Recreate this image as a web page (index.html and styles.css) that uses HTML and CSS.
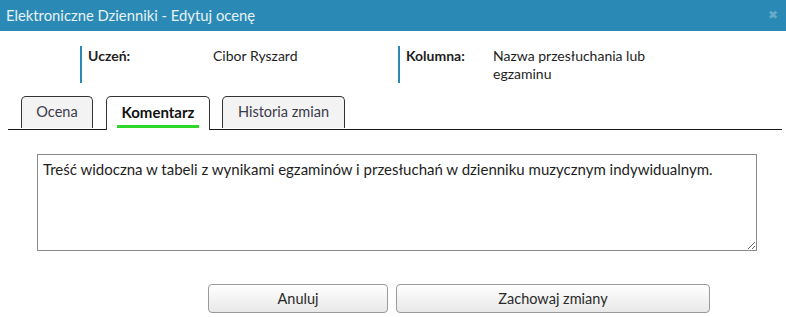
FILE: index.html
```html
<!DOCTYPE html>
<html lang="pl">
<head>
    <meta charset="UTF-8">
    <title>Edytuj ocenę</title>
    <link rel="stylesheet" href="styles.css">
</head>
<body>
    <div class="dialog">
        <div class="dialog-title">
            <span>Elektroniczne Dzienniki - Edytuj ocenę</span>
            <span class="close">&#x2716;</span>
        </div>
        <div class="info">
            <div class="info-item student">
                <span class="info-label">Uczeń:</span>
                <span class="info-value">Cibor Ryszard</span>
            </div>
            <div class="info-item column">
                <span class="info-label">Kolumna:</span>
                <span class="info-value">Nazwa przesłuchania lub egzaminu</span>
            </div>
        </div>
        <ul class="tabs">
            <li class="tab tab-ocena">Ocena</li>
            <li class="tab tab-koment active"><span>Komentarz</span></li>
            <li class="tab tab-hist">Historia zmian</li>
        </ul>
        <div class="comment">
            <textarea class="comment-box">Treść widoczna w tabeli z wynikami egzaminów i przesłuchań w dzienniku muzycznym indywidualnym.</textarea>
        </div>
        <div class="actions">
            <button class="btn btn-cancel">Anuluj</button>
            <button class="btn btn-save">Zachowaj zmiany</button>
        </div>
    </div>
</body>
</html>
```
FILE: styles.css
```css
body {margin: 0; background: #fff; font-family: Lato, "Open Sans", sans-serif; color: #1e1e1e;}
.dialog {width: 786px; height: 317px; overflow: hidden;}
.dialog-title {height: 31px; line-height: 30px; background: #2a8ab5; color: #e6f2f7; font-size: 14.8px; padding: 0 8px 0 6px; display: flex; justify-content: space-between;}
.dialog-title .close {color: #66abcb; font-size: 12px;}

.info {display: flex; padding: 15px 0 0 80px;}
.info-item {display: flex; border-left: 2px solid #2a8ab5; height: 37px; padding-left: 6px; font-size: 14px; line-height: 18px; padding-top: 1px; box-sizing: border-box;}
.info-label {font-weight: bold;}
.student {width: 318px;}
.student .info-label {width: 125px;}
.column .info-label {width: 87px;}
.column .info-value {width: 190px;}

.tabs {list-style: none; margin: 13px 4px 0 8px; padding: 0 0 0 13px; display: flex; gap: 13px; border-bottom: 1px solid #1a1a1a; height: 33px;}
.tab {height: 32px; box-sizing: border-box; border: 1px solid #333; border-bottom: none; border-radius: 5px 5px 0 0; background: #f3f3f3; color: #3a3a4a; font-size: 14.5px; text-align: center; line-height: 30px;}
.tab-ocena {width: 72px;}
.tab-koment {width: 104px;}
.tab-hist {width: 123px; margin-left: -1px;}
.tab.active {background: #fff; height: 34px; margin-bottom: -1px; font-weight: bold; color: #111; font-size: 15px;}
.tab.active span {display: inline-block; line-height: 25px; border-bottom: 3px solid #2ed82a; padding: 0 5px; margin-top: 1px;}

.comment {padding: 24px 29px 0 37px;}
.comment-box {display: block; width: 720px; height: 97px; box-sizing: border-box; border: 1px solid #8a8a8a; border-radius: 0; padding: 5px 5px; margin: 0; font-family: Lato, "Open Sans", sans-serif; font-size: 15px; color: #1e1e1e; resize: both;}

.actions {display: flex; gap: 8px; padding: 33px 0 0 208px;}
.btn {height: 29px; border: 1px solid #9a9a9a; border-radius: 4px; background: linear-gradient(#ffffff, #e8e8e8); font-family: Lato, "Open Sans", sans-serif; font-size: 14.5px; color: #2a2a2a; padding: 0; cursor: pointer;}
.btn-cancel {width: 180px;}
.btn-save {width: 314px;}
```
